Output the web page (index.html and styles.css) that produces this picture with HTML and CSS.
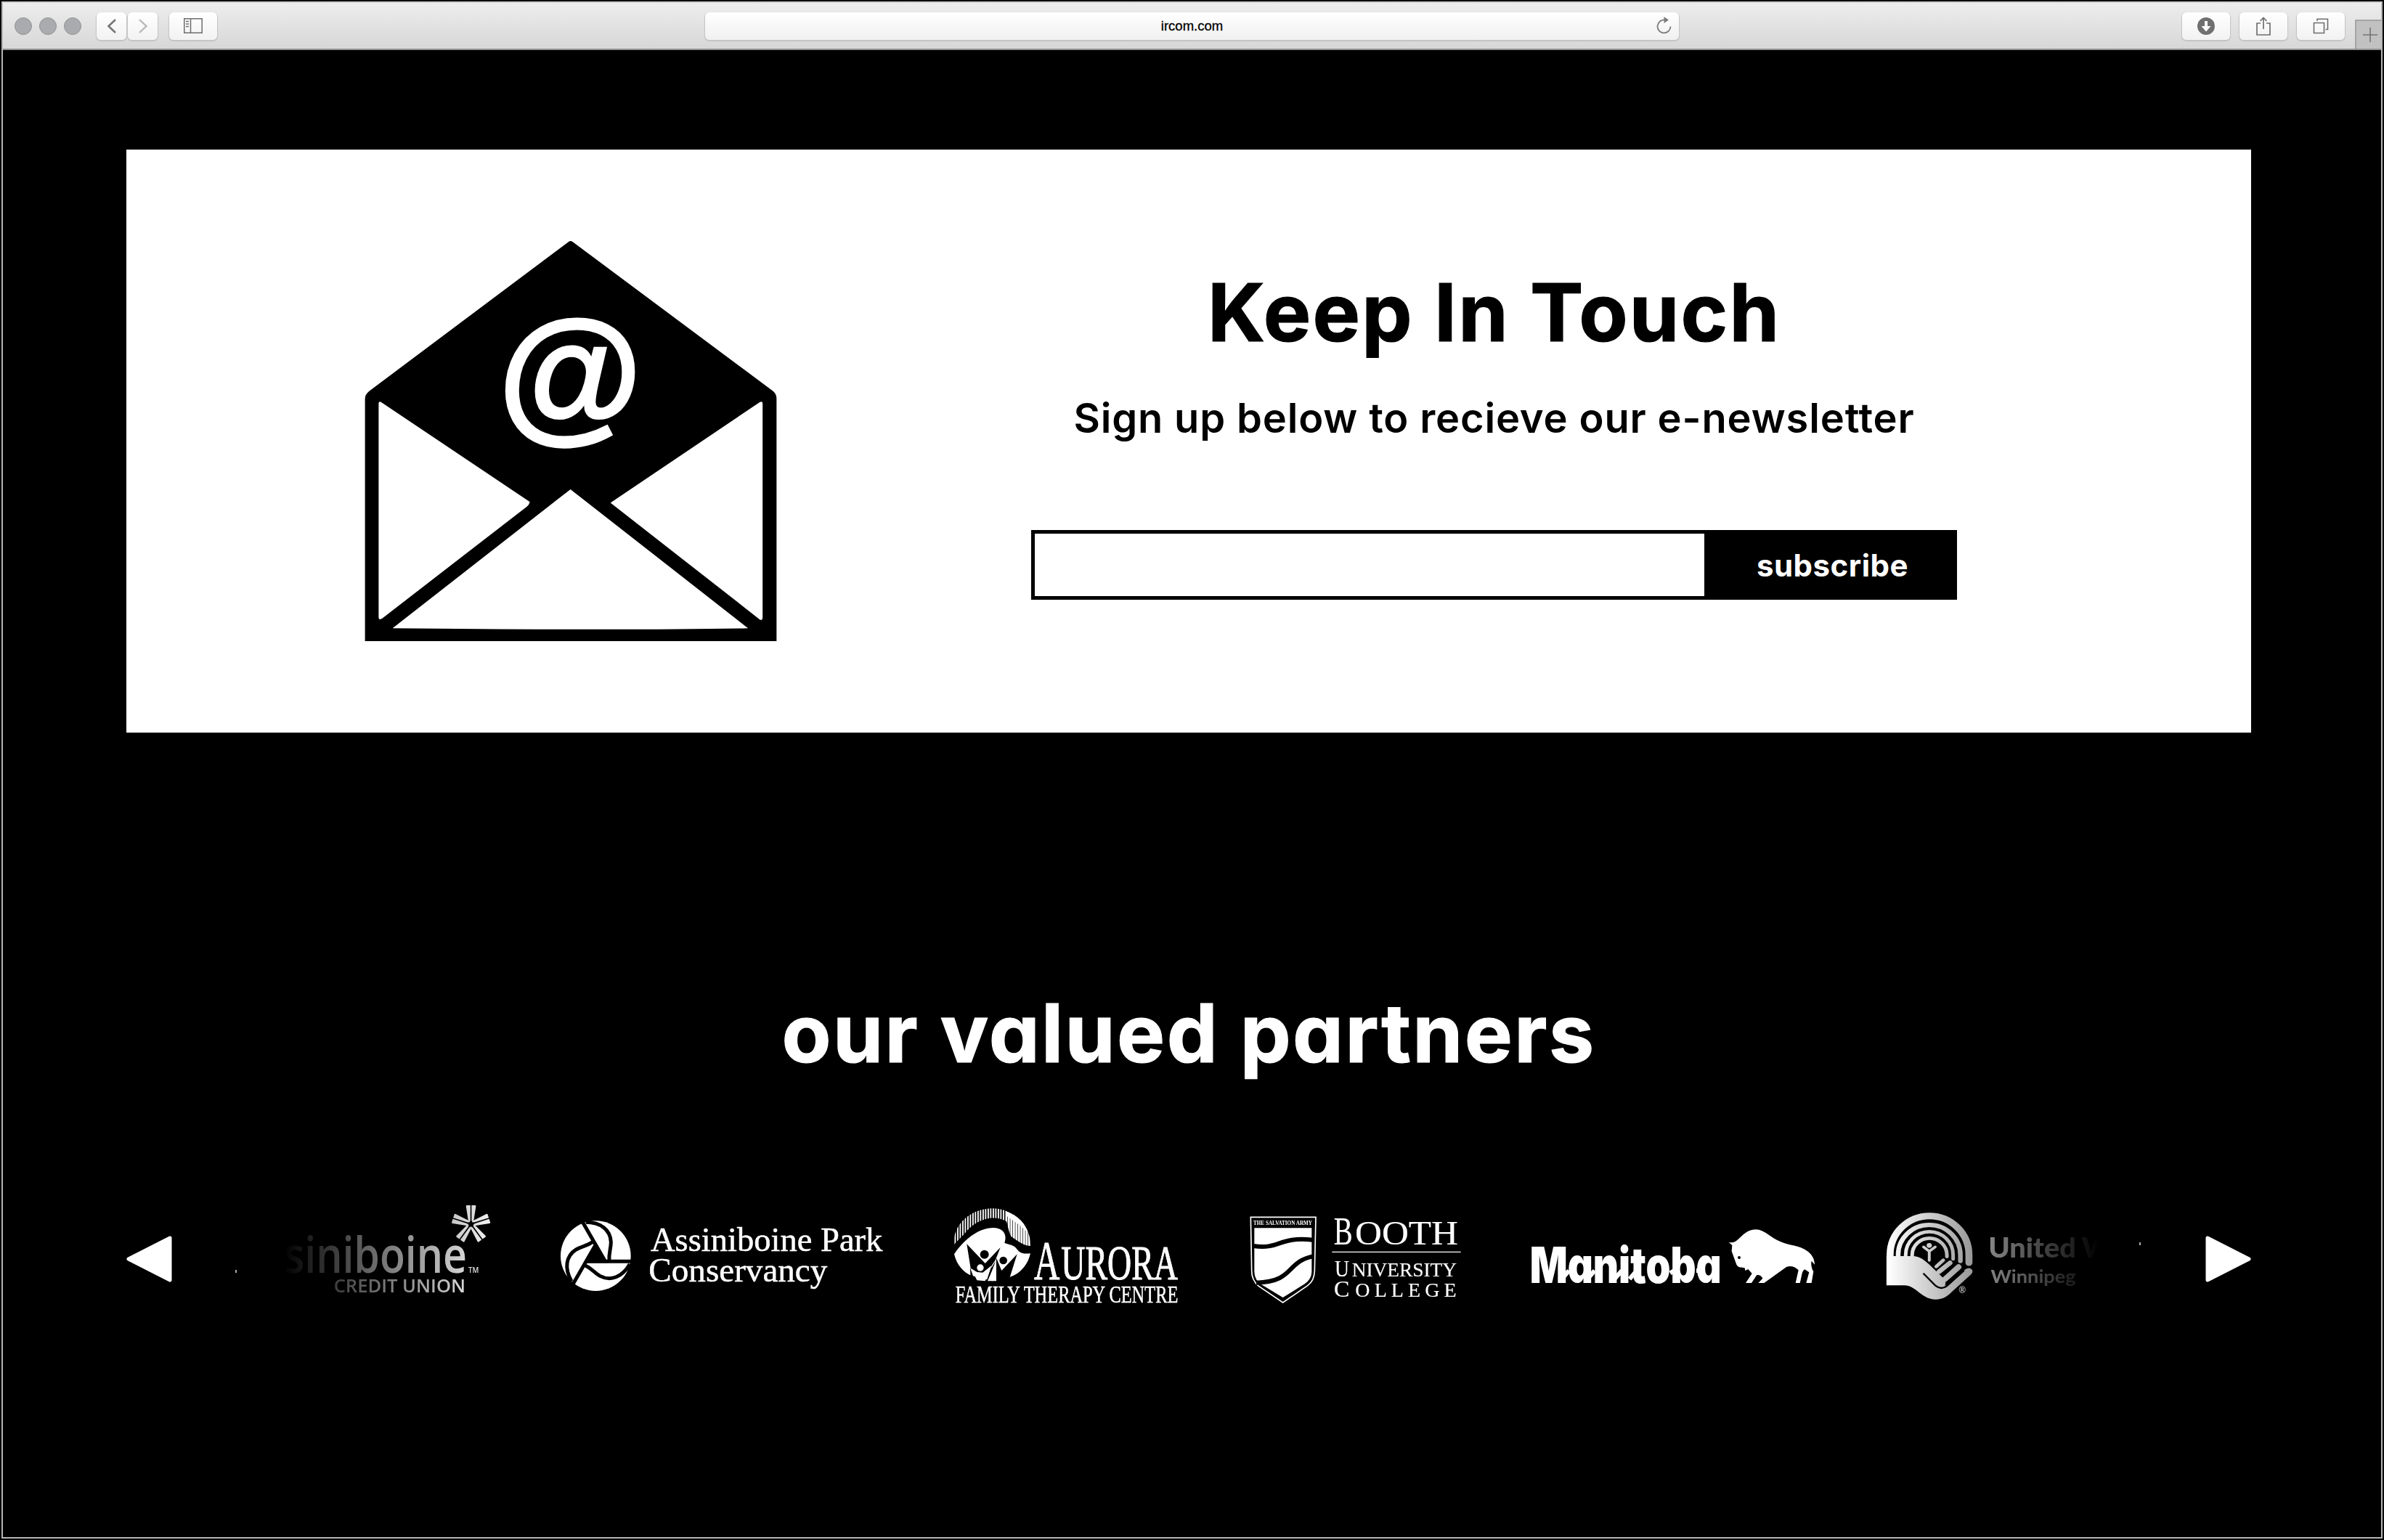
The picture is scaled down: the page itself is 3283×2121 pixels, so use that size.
FILE: index.html
```html
<!DOCTYPE html>
<html lang="en">
<head>
<meta charset="utf-8">
<title>ircom.com</title>
<link rel="stylesheet" href="styles.css">
</head>
<body>
<div class="window">
  <header class="toolbar">
    <div class="lights"><i></i><i></i><i></i></div>
    <div class="nav">
      <span class="btn btn-nav"><svg width="14" height="22" viewBox="0 0 14 22"><path d="M12 2 2.5 11 12 20" fill="none" stroke="#767676" stroke-width="2.6"/></svg></span>
      <span class="btn btn-nav"><svg width="14" height="22" viewBox="0 0 14 22"><path d="M2 2 11.5 11 2 20" fill="none" stroke="#b8b8b8" stroke-width="2.4"/></svg></span>
    </div>
    <span class="btn btn-side"><svg width="26" height="21" viewBox="0 0 26 21" fill="none" stroke="#6d6d6d" stroke-width="1.5"><path d="M.75 .75H25.2V20.2H.75ZM9.5 .75V20M3 4.5H7M3 8H7M3 11.5H7"/></svg></span>
    <div class="address">
      <span class="url">ircom.com</span>
      <svg class="reload" width="22" height="26" viewBox="0 0 22 26"><path d="M12 4.500A9 9 0 1 0 19.500 13.500" fill="none" stroke="#7c7c7c" stroke-width="1.800"/><path d="M10.500 0 17 4.500 10.500 9Z" fill="#7c7c7c"/></svg>
    </div>
    <div class="tools">
      <span class="btn"><svg width="24" height="24" viewBox="0 0 24 24"><circle cx="12" cy="12" r="12" fill="#6f6f6f"/><path d="M10 5H14V12H18.500L12 19.500 5.500 12H10Z" fill="#fff"/></svg></span>
      <span class="btn"><svg width="20" height="26" viewBox="0 0 20 26" fill="none" stroke="#6f6f6f" stroke-width="1.700"><path d="M6 9H1V25H19V9H14M10 17V1.500M5.500 6 10 1.500 14.500 6"/></svg></span>
      <span class="btn"><svg width="22" height="22" viewBox="0 0 22 22" fill="none" stroke="#6f6f6f" stroke-width="1.600"><path d="M1.500 6.500H15.500V20.500H1.500ZM6 4V1.300H20.500V15.500H17.500"/></svg></span>
    </div>
    <span class="newtab"><svg width="20" height="20" viewBox="0 0 20 20"><path d="M10 0V20M0 10H20" stroke="#747474" stroke-width="1.600"/></svg></span>
  </header>

  <main class="page">
    <section class="newsletter">
      <svg class="envelope" viewBox="100 76 1396 1404" preserveAspectRatio="none">
        <path d="M790 84Q797 78 805 84L1478 602Q1492 612 1492 630V1475H104V630Q104 616 118 604Z"/>
        <path fill="#fff" d="M150 646Q151 638 158 642L660 990Q658 1000 650 1006L162 1396Q150 1404 150 1390ZM1445 646Q1444 638 1436 642L932 993 1436 1400Q1445 1404 1445 1392ZM797 946 1396 1430Q1000 1438 197 1430Z"/>
        <text class="at" x="544" y="727" textLength="488" lengthAdjust="spacingAndGlyphs">@</text>
      </svg>
      <div class="signup">
        <h1>Keep In Touch</h1>
        <p>Sign up below to recieve our e-newsletter</p>
        <form class="form">
          <input type="email" aria-label="Email">
          <button type="button">subscribe</button>
        </form>
      </div>
    </section>

    <section class="partners">
      <h2>our valued partners</h2>
      <div class="carousel">
        <svg class="arrow" width="63" height="64" viewBox="0 0 63 64"><path d="M3 32 60 3V61Z" fill="#fff" stroke="#fff" stroke-width="5" stroke-linejoin="round"/></svg>
        <i class="speck speck-left"></i>
        <div class="track">
          <svg width="290" height="160" viewBox="672 60 812 480" preserveAspectRatio="none" fill="#fff">
            <g transform="translate(1396 198) scale(2.8 3)">
              <defs><g id="arm"><path id="half" d="M.8-26H5.800Q7-26 6.800-24.500L3.800-5.200 2-2.500.9-5Z"/><use href="#half" transform="scale(-1 1)"/></g></defs>
              <use href="#arm"/><use href="#arm" transform="rotate(72)"/><use href="#arm" transform="rotate(144)"/><use href="#arm" transform="rotate(216)"/><use href="#arm" transform="rotate(288)"/>
            </g>
            <text class="humanist" font-size="205" x="676" y="398" textLength="704" lengthAdjust="spacingAndGlyphs">siniboine</text>
            <text class="humanist" font-size="76" x="867" y="479" textLength="508" lengthAdjust="spacingAndGlyphs">CREDIT UNION</text>
            <text class="humanist" font-size="31" x="1386" y="399" textLength="40" lengthAdjust="spacingAndGlyphs">TM</text>
          </svg>

          <svg width="448" height="160" viewBox="96 0 1344 480" fill="#fff">
            <circle cx="241" cy="269" r="145"/>
            <path d="M201 292H281L241 223Z" fill="#000" stroke="#000" stroke-width="12"/>
            <g stroke="#000" stroke-width="15" fill="none">
              <g id="blade"><path d="M201 292H392M200 130C262 130 302 162 304 212C304 242 294 255 297 292"/></g>
              <use href="#blade" transform="rotate(120 241 269)"/><use href="#blade" transform="rotate(240 241 269)"/>
            </g>
            <text class="serif" font-size="138" x="468" y="250" textLength="958" lengthAdjust="spacingAndGlyphs">Assiniboine Park</text>
            <text class="serif" font-size="138" x="460" y="375" textLength="738" lengthAdjust="spacingAndGlyphs">Conservancy</text>
          </svg>

          <svg width="313" height="160" viewBox="66 0 939 480" fill="#fff">
            <defs><pattern id="rays" width="10.500" height="20" patternUnits="userSpaceOnUse"><rect width="5.500" height="20"/></pattern>
            <pattern id="rays2" width="10.500" height="20" patternUnits="userSpaceOnUse"><rect width="8.500" height="20"/></pattern></defs>
            <path fill="url(#rays)" d="M70 225C66 130 150 73 229 73C255 73 275 78 292 86L294 130C240 95 170 115 125 165C105 190 90 200 70 225Z"/>
            <path fill="url(#rays2)" d="M285 84C345 105 390 160 387 228C360 230 325 200 308 190C295 165 294 140 285 118Z"/>
            <path d="M285 84C340 105 365 135 378 175L340 140 290 105Z"/>
            <path d="M72 262C110 205 170 153 235 153C275 155 292 180 280 216C300 224 318 222 332 242C345 260 365 261 387 259C378 300 350 342 300 357L230 373 148 352C110 340 82 305 72 262Z"/>
            <g fill="#000">
              <path d="M124 220 200 300 263 234 243 285 225 312 190 338 160 335 140 320Z"/>
              <path d="M138 318 150 352 166 374H140ZM228 305 205 374H213L247 280 268 330 332 262 302 357 300 380H246V285L225 320Z"/>
              <circle cx="197" cy="263" r="18"/><circle cx="275" cy="288" r="16"/>
            </g>
            <circle cx="180" cy="318" r="14"/>
            <path d="M143 322 182 346 227 308 200 373 166 370ZM210 373 246 290V373Z"/>
            <text class="serif thick" font-size="230" x="402" y="365" textLength="106" lengthAdjust="spacingAndGlyphs">A</text>
            <text class="serif thick" font-size="200" x="514" y="365" textLength="482" lengthAdjust="spacingAndGlyphs">URORA</text>
            <text class="serif" font-size="99" x="77" y="461" textLength="920" lengthAdjust="spacingAndGlyphs">FAMILY THERAPY CENTRE</text>
          </svg>

          <svg width="297" height="160" viewBox="51 -30 891 480" fill="#fff">
            <path d="M67 79H336L331 300Q330 342 302 362L200 432 100 364Q71 340 71 300Z" fill="none" stroke="#fff" stroke-width="5"/>
            <path d="M82 124H319V305Q318 335 290 355L200 411 112 358Q83 340 82 305Z"/>
            <path d="M78 198C190 214 180 158 323 173M90 350C250 345 210 265 323 241" fill="none" stroke="#000" stroke-width="18"/>
            <text class="serif bold" font-size="22" x="78" y="110" textLength="243" lengthAdjust="spacingAndGlyphs">THE SALVATION ARMY</text>
            <text class="serif thin" font-size="163" x="410" y="191" textLength="78" lengthAdjust="spacingAndGlyphs">B</text>
            <text class="serif thin" font-size="141" x="498" y="191" textLength="426" lengthAdjust="spacingAndGlyphs">OOTH</text>
            <path d="M403 221H935V225H403Z"/>
            <text class="serif thin" font-size="95" x="414" y="324" textLength="60" lengthAdjust="spacingAndGlyphs">U</text>
            <text class="serif thin" font-size="83" x="485" y="324" textLength="433" lengthAdjust="spacingAndGlyphs">NIVERSITY</text>
            <text class="serif thin" font-size="93" x="411" y="408" textLength="64" lengthAdjust="spacingAndGlyphs">C</text>
            <text class="serif thin" font-size="84" x="499" y="408" textLength="418">OLLEGE</text>
          </svg>

          <svg width="396" height="160" viewBox="48 -90 1188 480" fill="#fff">
            <text class="manitoba" font-size="206" x="50" y="291" textLength="792" lengthAdjust="spacingAndGlyphs">Manitoba</text>
            <path d="M182 275 212 240M288 275 318 240M400 275 430 240M462 275 492 240M630 250 655 235M738 240 755 240" stroke="#fff" stroke-width="18"/>
            <path d="M868 119Q874 127 893 122C915 118 935 70 984 70C1020 70 1045 105 1085 120C1120 137 1165 135 1195 158C1215 172 1226 190 1227 215L1214 200C1210 215 1216 235 1222 243L1214 291H1192L1204 247 1186 235C1174 240 1174 262 1166 291H1148L1160 238C1145 222 1125 218 1110 225L1018 291H994L1012 272Q1005 256 988 258L966 291H942L968 252 952 234 940 240 938 229C925 225 912 230 904 215L884 160 886 135Z"/>
            <circle cx="915" cy="186" r="6" fill="#000"/>
          </svg>

          <svg width="296" height="160" viewBox="95.200 0 828.800 480" preserveAspectRatio="none" fill="#fff">
            <g fill="none" stroke="#fff" stroke-linecap="round">
              <path stroke-width="27" d="M120 275V265A152 161 0 0 1 424 265V297"/>
              <path stroke-width="18" d="M151 275V265A120 124 0 0 1 391 265V290"/>
              <path stroke-width="14" d="M180 275V265A91.500 96 0 0 1 363 265V282"/>
              <path stroke-width="14" d="M205 275V265A67 69 0 0 1 339 265V272"/>
              <path stroke-width="11" d="M249 232 271 250 294 232M271 250V288"/>
              <path stroke-width="14" d="M298 313 325 287"/>
              <path stroke-width="19" d="M309 334 351 298"/>
              <path stroke-width="22" d="M332 365 384 315"/>
            </g>
            <circle cx="271" cy="226" r="10"/>
            <path d="M106 270H210C240 273 255 290 270 304L328 364Q338 378 331 392L345 388 410 325Q425 313 436 326Q441 338 432 346L358 418C340 436 325 449 296 449C240 449 220 391 175 391H106Z"/>
            <path d="M248 341 295 392Q316 411 338 394L405 330" fill="none" stroke="#000" stroke-width="7"/>
            <text class="geo" font-size="40" x="384" y="424" textLength="28" lengthAdjust="spacingAndGlyphs">®</text>
            <text class="geo heavy" font-size="115" x="499" y="275" textLength="338" lengthAdjust="spacingAndGlyphs">United</text>
            <text class="geo heavy" font-size="115" x="858" y="275">W</text>
            <text class="geo" font-size="74" x="508" y="381" textLength="328" lengthAdjust="spacingAndGlyphs">Winnipeg</text>
          </svg>
        </div>
        <i class="speck speck-right"></i>
        <svg class="arrow" width="63" height="64" viewBox="0 0 63 64"><path d="M60 32 3 3V61Z" fill="#fff" stroke="#fff" stroke-width="5" stroke-linejoin="round"/></svg>
      </div>
    </section>
  </main>
</div>
</body>
</html>
```
FILE: styles.css
```css
* { box-sizing: border-box; }
html, body { height: 100%; margin: 0; background: #000; }
body { padding: 2px; }
.window {
  height: 2117px;
  width: 3279px;
  border: 2px solid #b5b5b5;
  border-top-color: #cfcfcf;
  background: #000;
  color: #fff;
}
.toolbar {
  display: flex;
  align-items: center;
  height: 65px;
  background: linear-gradient(#ededed, #d7d7d7);
  border-bottom: 2px solid #8f8f8f;
  padding-left: 16px;
}
.lights { display: flex; gap: 10px; width: 113px; }
.lights i {
  width: 24px; height: 24px; border-radius: 50%;
  background: #a9abaf; border: 1px solid #929292;
}
.nav { display: flex; gap: 2px; }
.btn {
  display: flex; align-items: center; justify-content: center;
  width: 66px; height: 38px; border-radius: 6px;
  background: linear-gradient(#fff, #f2f2f2);
  box-shadow: 0 1px 1px 1px #c4c4c4;
}
.btn-nav { width: 41px; }
.btn-side { margin-left: 16px; }
.address {
  display: flex; align-items: center; justify-content: flex-end;
  width: 1341px; height: 38px; margin-left: 672px; padding-right: 9px;
  border-radius: 6px;
  background: linear-gradient(#fff, #f0f0f0);
  box-shadow: 0 1px 1px 1px #c4c4c4;
}
.url {
  flex: 1; padding-left: 31px; text-align: center; color: #000;
  font: 18.5px/38px "Liberation Sans", Arial, sans-serif;
  -webkit-text-stroke: .3px #000;
}
.tools { display: flex; gap: 13px; margin-left: 693px; }
.newtab {
  display: flex; align-items: center; justify-content: center;
  align-self: flex-end;
  width: 36px; height: 40px; margin-left: auto;
  background: #c1c1c1; border: solid #a5a5a5; border-width: 2px 0 0 2px;
  padding-left: 4px;
}
.page { padding: 137px 178px 0 170px; }
.newsletter {
  display: flex; height: 803px; width: 2926px;
  background: #fff; color: #000;
}
.envelope { width: 570px; height: 555px; margin: 124px 0 0 327px; flex: none; }
.at {
  fill: #fff; stroke: #fff; stroke-width: 7px;
  font: italic 700 518px "Liberation Sans", Arial, sans-serif;
}
.signup {
  display: flex; flex-direction: column; align-items: center;
  width: 1275px; margin-left: 349px;
}
h1, h2, p { margin: 0; white-space: nowrap; }
h1, h2, .signup p, .form button {
  font-family: Inter, "Open Sans", sans-serif;
  font-feature-settings: "cv11";
}
h1, h2 { -webkit-text-stroke: 1.2px currentColor; }
h1 { font-size: 110px; line-height: 130px; font-weight: 700; letter-spacing: 2.2px; margin-top: 159px; }
.signup p { font-size: 56px; line-height: 68px; font-weight: 600; letter-spacing: .85px; margin-top: 47px; }
.form { display: flex; width: 1275px; height: 96px; margin-top: 120px; }
.form input { width: 932px; border: 5px solid #000; background: #fff; padding: 0 20px; }
.form button {
  width: 343px; border: 0; background: #000; color: #fff;
  font-size: 42px; font-weight: 700; letter-spacing: .5px;
}
.partners { width: 2926px; }
h2 { font-size: 111px; line-height: 134px; font-weight: 700; letter-spacing: 2.4px; margin-top: 347px; text-align: center; }
.carousel { display: flex; align-items: center; height: 160px; margin-top: 150px; }
.arrow { flex: none; margin-top: 28px; }
.track {
  display: flex; gap: 92px; width: 2500px; height: 160px; flex: none;
  -webkit-mask-image: linear-gradient(90deg, transparent, #000 300px, #000 2210px, transparent);
  mask-image: linear-gradient(90deg, transparent, #000 300px, #000 2210px, transparent);
}
.track svg { flex: none; overflow: visible; }
.speck { width: 2px; height: 4px; background: #aaa; flex: none; }
.speck-left { margin: 62px 64px 0 87px; }
.speck-right { margin: 0 89px 14px 56px; }
.serif { font-family: "Liberation Serif", "Times New Roman", serif; stroke: #fff; stroke-width: 1.5px; }
.thick { stroke-width: 3px; }
.thin { stroke-width: .5px; }
.bold { font-weight: 700; stroke: none; }
.humanist { font-family: "Open Sans", sans-serif; font-weight: 600; }
.manitoba { font-family: Inter, sans-serif; font-weight: 900; font-feature-settings: "cv11"; }
.geo { font-family: Lato, sans-serif; font-weight: 700; }
.heavy { font-weight: 900; }
```
